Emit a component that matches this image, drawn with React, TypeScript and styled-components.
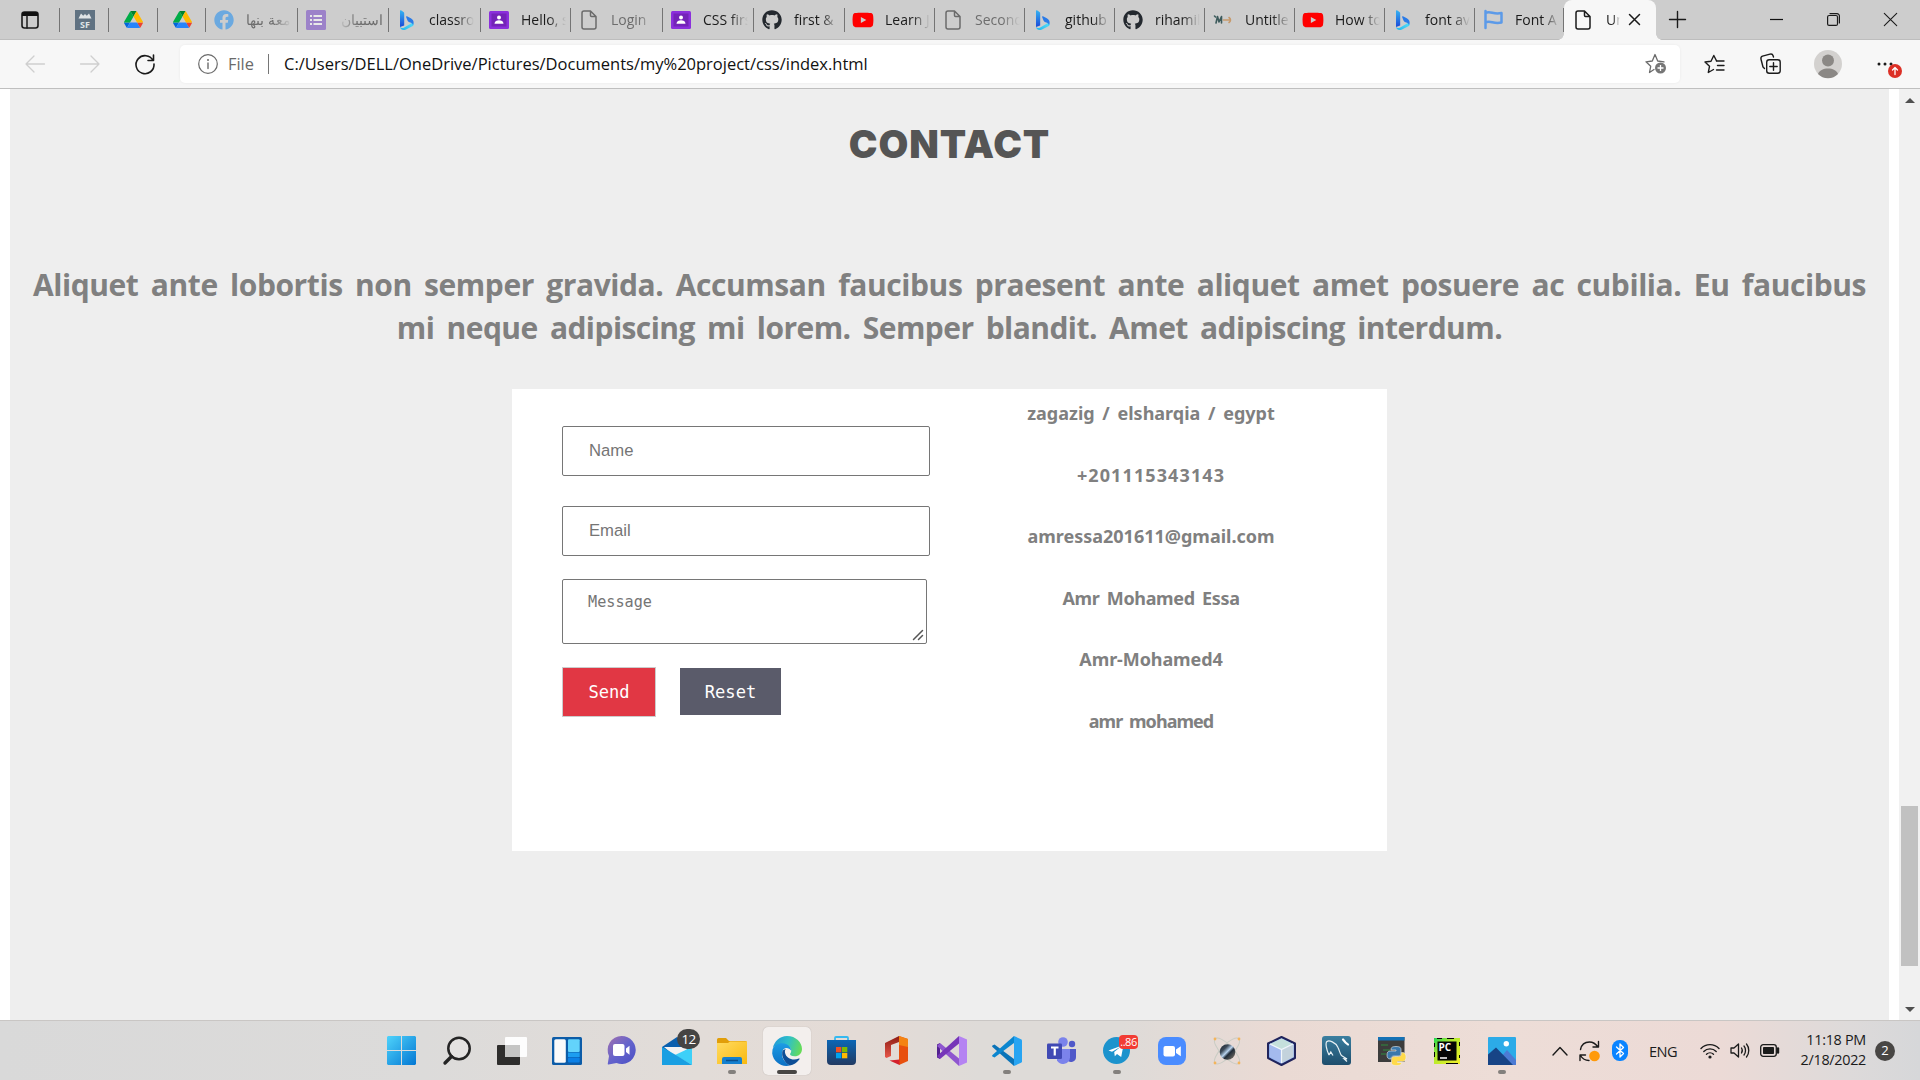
import React from "react";
import styled, { createGlobalStyle, css } from "styled-components";
import { FaGithub, FaFacebook, FaYoutube } from "react-icons/fa";

const ui = `"Open Sans", "Noto Sans", sans-serif`;

const GlobalStyle = createGlobalStyle`
  * { box-sizing: border-box; }
  body { margin: 0; overflow: hidden; font-family: ${ui}; }
  svg { display: block; flex: none; overflow: visible; }
`;

const Screen = styled.div`
  width: 1920px;
  height: 1080px;
  display: flex;
  flex-direction: column;
  background: #fff;
`;

/* ---------- tab strip ---------- */

const TabStrip = styled.div`
  height: 40px;
  flex: none;
  display: flex;
  background: #cdcdcd;
  border-bottom: 1px solid #bdbdbd;
`;

const Tab = styled.div<{ $w: number; $asleep?: boolean; $pinned?: boolean }>`
  position: relative;
  width: ${(p) => p.$w}px;
  height: 39px;
  flex: none;
  display: flex;
  align-items: center;
  padding-left: ${(p) => (p.$pinned ? 0 : 8)}px;
  justify-content: ${(p) => (p.$pinned ? "center" : "flex-start")};
  gap: 12px;
  font-size: 14px;
  color: ${(p) => (p.$asleep ? "#6d6d6d" : "#1b1b1b")};
  &::after {
    content: "";
    position: absolute;
    right: 0;
    top: 8px;
    width: 1px;
    height: 24px;
    background: #747474;
  }
`;

const ActiveTab = styled.div`
  position: relative;
  width: 92px;
  height: 40px;
  flex: none;
  display: flex;
  align-items: center;
  padding: 0 0 1px 11px;
  background: #f7f7f7;
  border-radius: 8px 8px 0 0;
  font-size: 14px;
  color: #1b1b1b;
  &::before,
  &::after {
    content: "";
    position: absolute;
    bottom: 0;
    width: 6px;
    height: 6px;
  }
  &::before {
    left: -6px;
    background: radial-gradient(circle at 0 0, transparent 5.5px, #f7f7f7 6px);
  }
  &::after {
    right: -6px;
    background: radial-gradient(circle at 100% 0, transparent 5.5px, #f7f7f7 6px);
  }
`;

const IconSlot = styled.span<{ $faded?: boolean }>`
  width: 20px;
  flex: none;
  display: flex;
  justify-content: center;
  opacity: ${(p) => (p.$faded ? 0.55 : 1)};
`;

const TabText = styled.span<{ $w?: number; $rtl?: boolean }>`
  width: ${(p) => p.$w ?? 45}px;
  line-height: 24px;
  overflow: hidden;
  white-space: nowrap;
  ${(p) =>
    p.$rtl
      ? css`
          direction: rtl;
          -webkit-mask-image: linear-gradient(to left, #000 55%, transparent);
        `
      : css`
          -webkit-mask-image: linear-gradient(to right, #000 60%, transparent);
        `}
`;

const ActiveText = styled(TabText)`
  margin-left: 15px;
  margin-right: 9px;
  -webkit-mask-image: linear-gradient(to right, #000 50%, transparent);
`;

const NewTab = styled.div`
  display: flex;
  align-items: center;
  margin-left: 13px;
`;

const WindowControls = styled.div`
  margin-left: auto;
  display: flex;
  align-items: center;
  gap: 44px;
  padding-right: 23px;
`;

/* ---------- address bar ---------- */

const Toolbar = styled.div`
  height: 49px;
  flex: none;
  display: flex;
  align-items: center;
  padding: 0 19px 1px 25px;
  background: #f7f7f7;
  border-bottom: 1px solid #bfbfbf;
`;

const NavButtons = styled.div`
  display: flex;
  align-items: center;
  gap: 35px;
  width: 155px;
`;

const AddressBox = styled.div`
  width: 1500px;
  height: 38px;
  display: flex;
  align-items: center;
  padding: 0 13px 0 18px;
  background: #fff;
  border-radius: 5px;
  box-shadow: 0 0 3px rgba(0, 0, 0, 0.06);
`;

const Scheme = styled.span`
  margin-left: 10px;
  width: 40px;
  font-size: 16.4px;
  color: #6a6a6a;
`;

const Divider = styled.span`
  width: 1px;
  height: 20px;
  margin-right: 15px;
  background: #767676;
`;

const Url = styled.span`
  flex: 1;
  font-size: 16.5px;
  color: #111;
`;

const Actions = styled.div`
  flex: 1;
  display: flex;
  align-items: center;
  justify-content: flex-end;
`;

const Action = styled.div<{ $gap: number }>`
  position: relative;
  margin-left: ${(p) => p.$gap}px;
`;

const UpdateBadge = styled.span`
  position: absolute;
  left: 11px;
  top: 8px;
`;

/* ---------- page ---------- */

const Viewport = styled.div`
  height: 931px;
  flex: none;
  display: flex;
`;

const Section = styled.section`
  width: 1879px;
  margin: 0 10px;
  flex: none;
  padding-top: 35px;
  background: #eee;
  display: flex;
  flex-direction: column;
  align-items: center;
`;

const Heading = styled.h2`
  margin: 0 0 99px;
  font: 900 38.5px/40px Inter, "Liberation Sans", sans-serif;
  letter-spacing: 0.9px;
  color: #555;
`;

const Intro = styled.p`
  margin: 0 0 40px;
  font: 700 30px/43px ${ui};
  color: #808080;
`;

const IntroLine = styled.span<{ $track: number }>`
  display: block;
  text-align: center;
  white-space: nowrap;
  word-spacing: 5px;
  letter-spacing: ${(p) => p.$track}px;
`;

const Card = styled.div`
  width: 875px;
  height: 462px;
  padding-left: 50px;
  display: flex;
  background: #fff;
`;

const Form = styled.form`
  width: 451px;
  padding-top: 37px;
`;

const Field = styled.input`
  display: block;
  width: 368px;
  height: 50px;
  margin-bottom: 30px;
  padding: 0 26px;
  border: 1px solid #767676;
  border-radius: 2px;
  font: 16.67px "Liberation Sans", Arial, sans-serif;
  &::placeholder { color: #757575; }
`;

const MessageBox = styled.div`
  position: relative;
  width: 365px;
  margin: -7px 0 23px;
`;

const Message = styled.textarea`
  display: block;
  width: 365px;
  height: 65px;
  padding: 12px 25px;
  border: 1px solid #767676;
  border-radius: 2px;
  overflow: hidden;
  resize: none;
  font: 15.2px/20px "DejaVu Sans Mono", monospace;
  &::placeholder { color: #757575; }
`;

const Grip = styled.span`
  position: absolute;
  right: 4px;
  bottom: 4px;
`;

const Buttons = styled.div`
  display: flex;
  gap: 24px;
`;

const button = css`
  padding: 0;
  font: 17.1px "DejaVu Sans Mono", monospace;
  color: #fff;
`;

const Send = styled.button`
  ${button}
  width: 94px;
  height: 50px;
  border: 1px solid #ccc;
  background: #e13744;
`;

const Reset = styled.button`
  ${button}
  width: 101px;
  height: 47px;
  margin-top: 1px;
  border: 0;
  background: #5a5b6a;
`;

const Contacts = styled.div`
  width: 276px;
  padding-top: 11px;
  display: flex;
  flex-direction: column;
  align-items: center;
  gap: 34.5px;
`;

const ContactLine = styled.div<{ $track: number }>`
  font: 700 18px/27px "Noto Sans", sans-serif;
  letter-spacing: ${(p) => p.$track}px;
  word-spacing: 3px;
  white-space: nowrap;
  color: #808080;
`;

const Scrollbar = styled.div`
  width: 21px;
  display: flex;
  flex-direction: column;
  align-items: center;
  background: #f1f1f1;
`;

const Arrow = styled.span<{ $down?: boolean }>`
  margin-top: ${(p) => (p.$down ? "auto" : "9px")};
  margin-bottom: ${(p) => (p.$down ? "8px" : 0)};
  border: 5px solid transparent;
  border-top-width: ${(p) => (p.$down ? 5 : 0)}px;
  border-bottom-width: ${(p) => (p.$down ? 0 : 5)}px;
  ${(p) => (p.$down ? "border-top-color" : "border-bottom-color")}: #505050;
`;

const Thumb = styled.span`
  width: 17px;
  height: 160px;
  margin-top: 703px;
  background: #c1c1c1;
`;

/* ---------- taskbar ---------- */

const Taskbar = styled.div`
  height: 60px;
  flex: none;
  display: flex;
  align-items: center;
  padding-left: 374px;
  border-top: 1px solid #c9c6c4;
  background: linear-gradient(
    90deg, #d9d9d9 0, #dcdbda 420px, #e2dcd8 700px, #e4dbd6 860px, #dedbd8 980px,
    #dedbd8 1120px, #eadad4 1280px, #edddd7 1500px, #ecdad6 1720px, #dddada 1850px, #d6d7d9 100%
  );
`;

const TaskbarApp = styled.div`
  position: relative;
  width: 55px;
  height: 59px;
  display: flex;
  align-items: center;
  justify-content: center;
`;

const Tile = styled.div<{ $focused?: boolean }>`
  width: 48px;
  height: 48px;
  display: flex;
  align-items: center;
  justify-content: center;
  border-radius: 5px;
  background: ${(p) => (p.$focused ? "#f3efed" : "transparent")};
  box-shadow: ${(p) => (p.$focused ? "0 0 1px rgba(0,0,0,.25)" : "none")};
`;

const Running = styled.span<{ $wide?: boolean }>`
  position: absolute;
  bottom: 6px;
  width: ${(p) => (p.$wide ? 20 : 8)}px;
  height: 4px;
  border-radius: 2px;
  background: ${(p) => (p.$wide ? "#484644" : "#83807d")};
`;

const MailCount = styled.span`
  position: absolute;
  left: 28px;
  top: 8px;
  width: 23px;
  height: 20px;
  border-radius: 10px;
  background: #454443;
  color: #fff;
  font: 13.5px/20px ${ui};
  letter-spacing: -0.6px;
  text-align: center;
`;

const ChatCount = styled.span`
  position: absolute;
  left: 30px;
  top: 14px;
  width: 19px;
  height: 14px;
  border-radius: 4px;
  background: #f23c34;
  color: #fff;
  font: 11px/13px ${ui};
  letter-spacing: -0.5px;
  text-align: center;
`;

const Tray = styled.div`
  display: flex;
  align-items: center;
  margin-left: 23px;
  color: #1b1b1b;
`;

const Lang = styled.span`
  width: 51px;
  padding-left: 21px;
  margin-right: 21px;
  font-size: 14.6px;
  letter-spacing: -0.6px;
`;

const Clock = styled.div`
  width: 86px;
  font-size: 14.4px;
  line-height: 20px;
  letter-spacing: -0.3px;
  text-align: right;
  white-space: nowrap;
  position: relative;
  top: -1px;
`;

const Notice = styled.span`
  width: 20px;
  height: 20px;
  margin-left: 9px;
  border-radius: 50%;
  background: #484644;
  color: #fff;
  font-size: 13px;
  line-height: 19px;
  text-align: center;
`;

const Gap = styled.span<{ $w: number }>`
  width: ${(p) => p.$w}px;
  flex: none;
`;

/* ---------- drawings ---------- */

const line = (w: number, c = "#1b1b1b") => ({
  fill: "none", stroke: c, strokeWidth: w, strokeLinecap: "round" as const, strokeLinejoin: "round" as const,
});

const Drive = () => (
  <svg width="19" height="17" viewBox="0 0 87 78">
    <path d="M6.600 66.850l3.850 6.650c.8 1.400 1.950 2.500 3.300 3.300l13.750-23.800h-27.500c0 1.550.4 3.100 1.200 4.500z" fill="#0066da" />
    <path d="M43.650 25L29.900 1.200c-1.350.8-2.500 1.900-3.300 3.300L1.200 48.500a9 9 0 0 0-1.200 4.500h27.500z" fill="#00ac47" />
    <path d="M73.550 76.800c1.350-.8 2.500-1.900 3.300-3.300l8.950-16a9 9 0 0 0 1.200-4.500H59.500l5.850 11.500z" fill="#ea4335" />
    <path d="M43.650 25L57.400 1.200C56.050.4 54.500 0 52.900 0H34.400c-1.600 0-3.150.45-4.500 1.200z" fill="#00832d" />
    <path d="M59.800 53H27.500L13.750 76.800c1.350.8 2.900 1.200 4.500 1.200h50.800c1.600 0 3.150-.45 4.500-1.200z" fill="#2684fc" />
    <path d="M73.400 26.500L60.700 4.500c-.8-1.400-1.950-2.500-3.300-3.300L43.650 25 59.800 53h27.450c0-1.550-.4-3.100-1.200-4.500z" fill="#ffba00" />
  </svg>
);

const Bing = () => (
  <svg width="14" height="20" viewBox="0 0 14 20">
    <defs>
      <linearGradient id="bingA" x1="0" y1="0" x2="0" y2="1"><stop offset="0" stopColor="#35b5f2" /><stop offset="1" stopColor="#1b48d8" /></linearGradient>
      <linearGradient id="bingB" x1="0" y1="1" x2="1" y2="0"><stop offset="0" stopColor="#1fb5ee" /><stop offset="1" stopColor="#5be0f8" /></linearGradient>
    </defs>
    <path d="M0 .8C0 .2.500 0 1 .300L3.500 2c.5.300.7.800.7 1.400v12.200L0 17z" fill="url(#bingA)" />
    <path d="M0 16.500c.5 1.500 2.500 2 4.200 1l8-4.800c1.800-.2 2 2.300.6 3.300L6 19.400c-3 1.500-6 .1-6-2.900z" fill="url(#bingB)" />
    <path d="M6 6.800c0-.5.500-.7 1-.5l3.800 2c3 1.700 3.600 4.500 2 7.200.2-1.400-.6-2.300-1.800-2.700l-2.200-.9c-.7-.3-1-.8-1.300-1.400z" fill="#2a7be8" />
  </svg>
);

const PurpleCard = () => (
  <svg width="20" height="18" viewBox="0 0 20 18">
    <rect width="20" height="18" rx="1.500" fill="#8b2fdc" />
    <rect x="2.500" y="2.500" width="15" height="13" fill="#7423b8" />
    <circle cx="10" cy="6.500" r="2" fill="#fff" />
    <path d="M5.500 12.800c0-4.600 9-4.600 9 0z" fill="#fff" />
  </svg>
);

const FormList = () => (
  <svg width="20" height="20" viewBox="0 0 20 20">
    <rect width="20" height="20" rx="1.500" fill="#7545c6" />
    <path d="M7.500 6H16M7.500 10H16M7.500 14H16" stroke="#fff" strokeWidth="1.800" />
    <path d="M4 6h2M4 10h2M4 14h2" stroke="#fff" strokeWidth="1.800" />
  </svg>
);

const Page = () => (
  <svg width="16" height="20" viewBox="0 0 16 20">
    <path d="M3 1h6.500L15 6.500V17a2 2 0 0 1-2 2H3a2 2 0 0 1-2-2V3a2 2 0 0 1 2-2zM9.500 1v4.500a1 1 0 0 0 1 1H15" {...line(1.500)} />
  </svg>
);

const Sf = () => (
  <svg width="20" height="20" viewBox="0 0 20 20">
    <rect width="20" height="20" fill="#607282" />
    <path d="M3.500 8.500l2.500-5 2.200 2.200L10 4l1.800 1.700L14 3.500l2.500 5z" fill="#dfe3e6" />
    <text x="10" y="17.500" fontSize="9" fontWeight="700" fill="#dfe3e6" textAnchor="middle" fontFamily="Open Sans">SF</text>
  </svg>
);

const Flag = () => (
  <svg width="19" height="19" viewBox="0 0 19 19">
    <path d="M1.500 1v17M1.500 3c5-2.500 8 2 16 0v9.500c-8 2-11-2.500-16 0" {...line(2.500, "#5c9ae8")} />
  </svg>
);

const MavenMark = () => (
  <svg width="18" height="10" viewBox="0 0 18 10">
    <path d="M.5 1l1 1M2 8L3.500 1.500 5 7 7.500 1.500 7.500 8" {...line(1.600, "#3d5b5c")} />
    <path d="M9.500 5h6M15 2.500c2 1.500 2 3.500 0 5" {...line(1.600, "#c79a6c")} />
  </svg>
);

const AddFavorite = () => (
  <svg width="22" height="21" viewBox="0 0 22 21">
    <path d="M9 16.500L4.500 19.500l1.200-6.200L1 8.800l6.300-.8L10 1.500 12.700 8l6.300.8" {...line(1.300, "#6b6b6b")} />
    <circle cx="15.500" cy="15" r="5.500" fill="#767676" />
    <path d="M15.500 12v6M12.500 15h6" stroke="#fff" strokeWidth="1.300" />
  </svg>
);

const Favorites = () => (
  <svg width="21" height="20" viewBox="0 0 21 20">
    <path d="M9.500 15.500L4.300 18.500l1.200-6.200L1 8l6-.8L9.800 1.500l2.700 5.200" {...line(1.400)} />
    <path d="M12.500 7H20M13.500 11.500H20M12.500 16H20" {...line(1.400)} />
  </svg>
);

const Collections = () => (
  <svg width="21" height="21" viewBox="0 0 21 21">
    <path d="M4.500 15.500L3 14 1 6.300C.6 4.500 1.300 3.600 2.500 3.200L10 1.100c1.500-.4 2.700.3 3.100 1.600l.4 1.300" {...line(1.400)} />
    <rect x="6.700" y="6.700" width="13.500" height="13.500" rx="2.500" {...line(1.400)} />
    <path d="M13.500 9.800v7.400M9.800 13.500h7.400" {...line(1.400)} />
  </svg>
);

const Avatar = () => (
  <svg width="28" height="28" viewBox="0 0 28 28">
    <circle cx="14" cy="14" r="14" fill="#d3d1cf" />
    <circle cx="14" cy="10.500" r="6" fill="#8b8885" />
    <path d="M4 24c2-7.500 18-7.500 20 0a14 14 0 0 1-20 0z" fill="#8b8885" />
  </svg>
);

const WindowsLogo = () => (
  <svg width="29" height="29" viewBox="0 0 29 29">
    <defs><linearGradient id="win" x1="0" y1="0" x2="1" y2="1"><stop offset="0" stopColor="#4fd3fb" /><stop offset="1" stopColor="#0377d3" /></linearGradient></defs>
    <path d="M1 0h13v14H0V1zM15 0h13l1 1v13H15zM0 15h14v14H1l-1-1zM15 15h14v13l-1 1H15z" fill="url(#win)" />
  </svg>
);

const Search = () => (
  <svg width="28" height="29" viewBox="0 0 28 29">
    <circle cx="16" cy="12.500" r="10.700" fill="#e4e2e1" stroke="#242424" strokeWidth="2.500" />
    <path d="M8.500 20.500L2 27" stroke="#242424" strokeWidth="3.400" strokeLinecap="round" />
  </svg>
);

const TaskView = () => (
  <svg width="30" height="28" viewBox="0 0 30 28">
    <rect x="0" y="8" width="23" height="20" rx="1" fill="#2e2d2c" />
    <rect x="8" y="0" width="22" height="20" rx="1" fill="#fff" opacity=".93" />
    <rect x="8" y="8" width="15" height="12" fill="#c5c5c4" />
  </svg>
);

const Widgets = () => (
  <svg width="30" height="28" viewBox="0 0 30 28">
    <rect width="30" height="28" rx="1.500" fill="#0c5ca8" />
    <rect x="2.300" y="2.300" width="11.500" height="23.400" rx="1.500" fill="#fafafa" />
    <rect x="16" y="2.300" width="11.700" height="12.700" rx="1" fill="#63d3fb" />
    <rect x="16" y="15.500" width="11.700" height="4.500" fill="#1c9df0" />
    <rect x="16" y="20.500" width="11.700" height="5" rx="1" fill="#0b80e6" />
  </svg>
);

const Chat = () => (
  <svg width="29" height="29" viewBox="0 0 29 29">
    <defs><linearGradient id="chat" x1="0" y1="0" x2="1" y2="1"><stop offset="0" stopColor="#a270ae" /><stop offset=".5" stopColor="#6463cc" /><stop offset="1" stopColor="#4a4fc4" /></linearGradient></defs>
    <path d="M14.500 0a14 14 0 1 1-5 27l-8 1.500c-.6 0-.9-.4-.7-1L2 20A14 14 0 0 1 14.500 0z" fill="url(#chat)" />
    <rect x="6" y="8" width="11.500" height="12" rx="2" fill="#fff" />
    <path d="M19 12.500l3.500-2.800v9l-3.500-2.800z" fill="#fff" />
  </svg>
);

const Mail = () => (
  <svg width="30" height="28" viewBox="0 0 30 28">
    <path d="M0 10L15 0l15 10v5H0z" fill="#0a5fae" />
    <path d="M2 10h26L15 21z" fill="#f2f2f2" />
    <path d="M30 10v18L13 18z" fill="#3dd0f8" />
    <path d="M0 10v18h30L13 17.500z" fill="#199fe2" />
  </svg>
);

const Explorer = () => (
  <svg width="30" height="28" viewBox="0 0 30 28">
    <defs><linearGradient id="fold" x1="0" y1="0" x2="1" y2="1"><stop offset="0" stopColor="#ffdb62" /><stop offset="1" stopColor="#f9b90f" /></linearGradient></defs>
    <path d="M0 2.500A1.500 1.500 0 0 1 1.500 1H9l3 3h16.500A1.500 1.500 0 0 1 30 5.500V12H0z" fill="#e19e09" />
    <path d="M0 6h11l2-1.500h17V27H0z" fill="url(#fold)" />
    <path d="M5 27v-5a2 2 0 0 1 2-2h16a2 2 0 0 1 2 2v5z" fill="#1480cf" />
    <path d="M9 23.500h12" stroke="#0a4f8c" strokeWidth="1.500" />
  </svg>
);

const Edge = () => (
  <svg width="30" height="30" viewBox="0 0 30 30">
    <defs>
      <linearGradient id="edgeA" x1="0" y1=".3" x2="1" y2=".5"><stop offset="0" stopColor="#2299d8" /><stop offset=".5" stopColor="#2fc0c8" /><stop offset="1" stopColor="#66dc58" /></linearGradient>
      <linearGradient id="edgeB" x1="0" y1="0" x2="0" y2="1"><stop offset="0" stopColor="#1d9ce4" /><stop offset="1" stopColor="#0c70c4" /></linearGradient>
    </defs>
    <path d="M.8 12.500C2.200 5 8 0 15 0c9 0 15 6.500 15 13 0 4.500-3.200 7.300-7.200 7.300-3.500 0-5-1.300-4.700-2.300.4-1 1.100-1.400 1.100-3.200 0-3.300-3.200-6.300-8-6.300-4.200 0-8.400 1-10.400 4z" fill="url(#edgeA)" />
    <path d="M.5 13.500C2 9.500 6 7 10.500 7.200c5 .1 8.700 3.700 8.700 7.500-2-3-6-3.800-8.200-.7-2.600 4-.5 11 6.800 15.600C9 31.500 1.300 25.500.2 17.500z" fill="url(#edgeB)" />
    <path d="M10.800 14.500c-2 6 2 11.800 8.500 12.200 3.200.2 5.800-1 8-3.200.6-.6.200-1.200-.5-.9-5.500 2.400-12.500.4-13.800-5.800-.3-1.700.2-3 .8-4z" fill="#0d4e96" />
    <path d="M10.800 14.500C9.500 20 12 26.500 17.800 29.600c3.800-.6 7.200-2.800 9.300-6-5.300 3.800-15 2.400-16.300-9.100z" fill="#0d4e96" />
  </svg>
);

const Store = () => (
  <svg width="29" height="29" viewBox="0 0 29 29">
    <defs><linearGradient id="store" x1="0" y1="0" x2="0" y2="1"><stop offset="0" stopColor="#0b66b5" /><stop offset="1" stopColor="#223a62" /></linearGradient></defs>
    <path d="M8 6V2a1 1 0 0 1 1-1h11a1 1 0 0 1 1 1v4" fill="none" stroke="#35b9f0" strokeWidth="1.800" />
    <path d="M0 4h29v21a4 4 0 0 1-4 4H4a4 4 0 0 1-4-4z" fill="url(#store)" />
    <rect x="9" y="11" width="5.300" height="5.300" fill="#f25022" /><rect x="15" y="11" width="5.300" height="5.300" fill="#7fba00" />
    <rect x="9" y="17" width="5.300" height="5.300" fill="#00a4ef" /><rect x="15" y="17" width="5.300" height="5.300" fill="#ffb900" />
  </svg>
);

const Office = () => (
  <svg width="23" height="29" viewBox="0 0 23 29">
    <defs><linearGradient id="off" x1="0" y1="0" x2="0" y2="1"><stop offset="0" stopColor="#8d1c14" /><stop offset="1" stopColor="#e8574a" /></linearGradient></defs>
    <path d="M0 7L14 0v6L6 9v11l-4.500 2L0 21z" fill="url(#off)" />
    <path d="M14 0l9 3v22l-9 4z" fill="#e8500e" />
    <path d="M14 0l9 3v8l-9-2z" fill="#f48312" />
    <path d="M4.500 24.500l10-1V29z" fill="#d4202c" />
  </svg>
);

const VisualStudio = () => (
  <svg width="30" height="30" viewBox="0 0 30 30">
    <path d="M0 8.500L3 7v16l-3-1.500z" fill="#52218f" />
    <path d="M3 7l19 15.500V30L0 10z" fill="#8f56cf" />
    <path d="M3 23L22 7.500V0L0 20z" fill="#7636b8" />
    <path d="M22 0l8 3.500v23L22 30z" fill="#b583f2" />
  </svg>
);

const VsCode = () => (
  <svg width="30" height="30" viewBox="0 0 30 30">
    <path d="M2.500 8.500L22 23v7L.5 11c-.6-.6-.6-1 0-1.500z" fill="#0a73b8" />
    <path d="M2.500 21.500L22 7V0L.5 19c-.6.600-.6 1 0 1.500z" fill="#0b86cf" />
    <path d="M22 0l7 3.200c.6.300 1 .8 1 1.500v20.600c0 .7-.4 1.200-1 1.500L22 30z" fill="#27a4f2" />
  </svg>
);

const Teams = () => (
  <svg width="30" height="28" viewBox="0 0 30 28">
    <circle cx="25" cy="7" r="3.200" fill="#5059c9" /><circle cx="16" cy="5" r="4.800" fill="#7b83eb" />
    <path d="M20 12h9v8a5 5 0 0 1-9 3z" fill="#5059c9" />
    <path d="M10 12h13v8.500a7 7 0 0 1-13 3z" fill="#7b83eb" />
    <rect x="0" y="6.500" width="15" height="15.500" rx="1.300" fill="#4049b4" />
    <path d="M4 10.500h7.500M7.750 10.500v8" stroke="#fff" strokeWidth="2.200" />
  </svg>
);

const Telegram = () => (
  <svg width="27" height="27" viewBox="0 0 27 27">
    <circle cx="13.500" cy="13.500" r="13.500" fill="#1c93cd" />
    <path d="M5.500 13.500L20.500 8l-2.300 12-4.200-3-2.200 2.200-.6-4.200L18 9.500l-9 5.300z" fill="#fff" />
  </svg>
);

const Zoom = () => (
  <svg width="28" height="28" viewBox="0 0 28 28">
    <rect width="28" height="28" rx="8" fill="#4a8cff" />
    <rect x="5.500" y="9" width="11.500" height="10.500" rx="2" fill="#fff" /><path d="M18 12.500l4.800-3.200v10L18 16z" fill="#fff" />
  </svg>
);

const Atom = () => (
  <svg width="28" height="28" viewBox="0 0 28 28">
    <defs><linearGradient id="globe" x1="0" y1="0" x2="1" y2="1"><stop offset="0" stopColor="#1a222d" /><stop offset=".3" stopColor="#3c4a58" /><stop offset=".48" stopColor="#b9d4ee" /><stop offset=".6" stopColor="#1f2b38" /><stop offset="1" stopColor="#8a8070" /></linearGradient></defs>
    <ellipse cx="14" cy="14" rx="17" ry="6" transform="rotate(46 14 14)" fill="none" stroke="#c9ccc4" />
    <ellipse cx="14" cy="14" rx="17" ry="6" transform="rotate(-46 14 14)" fill="none" stroke="#c9ccc4" />
    <circle cx="14.500" cy="15" r="7.800" fill="url(#globe)" />
    <g fill="#f4b45a"><circle cx="2" cy="2" r="1.400" /><circle cx="26" cy="2" r="1.400" /><circle cx="2" cy="26" r="1.400" /><circle cx="26" cy="26" r="1.400" /></g>
  </svg>
);

const NetBeans = () => (
  <svg width="29" height="30" viewBox="0 0 29 30">
    <path d="M14.500 1L28 7.500v14.500L14.500 29 1 22V7.500z" fill="#8fb0ef" stroke="#20245c" strokeWidth="2" strokeLinejoin="round" />
    <path d="M14.500 2.500L26 8l-11.500 5.500L3 8z" fill="#c5e0dc" />
    <path d="M15 13.500L26.500 8v13L15 27z" fill="#c3d2dc" /><path d="M3 8l11 5.500V27L3 21z" fill="#a4baee" />
    <path d="M3 8l11.500 5.500L26 8M14.500 13.500V27" fill="none" stroke="#f2f7fb" strokeWidth="1.200" />
  </svg>
);

const MySql = () => (
  <svg width="29" height="29" viewBox="0 0 29 29">
    <defs><linearGradient id="sql" x1="0" y1="0" x2="0" y2="1"><stop offset="0" stopColor="#3b7fa0" /><stop offset="1" stopColor="#1d4d6c" /></linearGradient></defs>
    <rect width="29" height="29" rx="3" fill="url(#sql)" />
    <path d="M7 19C4.500 14 3 7 5 5.500c2-1.500 8.500.5 11 6 1.700 3.500 1.800 6 3.500 8l5.500 3.500-3-.2 3 2.700M7 19l1.800-3 2.200 3.500" fill="none" stroke="#e8f1f5" strokeWidth="1.200" />
    <path d="M21 3.500l2.500 3L26 8.500" stroke="#fff" strokeWidth="2.200" strokeLinecap="round" fill="none" />
  </svg>
);

const Python = () => (
  <svg width="28" height="30" viewBox="0 0 28 30">
    <rect width="26.500" height="25" y="1" fill="#3c3c3c" /><rect width="26.500" height="3.500" y="1" fill="#1471b5" />
    <path d="M3 9h7M5 14h7M3 18h5" stroke="#2f8a3e" strokeWidth="1.200" />
    <path d="M18 10.500c4 0 5 1 5 3.500v3c0 2-1 3-3 3h-4c-2 0-3 1-3 3h-1c-2 0-3-1.500-3-4s1-4 3-4h6v-1h-5c0-2.500 1-3.500 5-3.500z" fill="#3a77ac" stroke="#eee" strokeWidth=".6" />
    <path d="M18.500 29.500c-4 0-5-1-5-3v-3c0-2 1-3 3-3h4c2 0 3-1 3-4h1c2.500 0 3.500 2 3.500 4.500s-1 4.500-3.500 4.500h-5v1h4c0 2-1 3-5 3z" fill="#ffd94a" stroke="#eee" strokeWidth=".6" />
  </svg>
);

const PyCharm = () => (
  <svg width="26" height="26" viewBox="0 0 26 26">
    <defs><linearGradient id="pc" x1="0" y1="0" x2="1" y2="1"><stop offset="0" stopColor="#21d752" /><stop offset=".4" stopColor="#b4ea2c" /><stop offset="1" stopColor="#f4f02a" /></linearGradient></defs>
    <rect width="26" height="26" fill="url(#pc)" />
    <path d="M.5 5v4M.5 14v5M3 .5h5M13 .5h7M25.500 4v4M25.500 17v3M12 25.500h12" stroke="#050505" />
    <rect x="3.500" y="3.500" width="19" height="19" fill="#050505" />
    <text x="4.500" y="13" fontSize="10" fontWeight="700" fill="#fff" fontFamily="Open Sans">PC</text>
    <path d="M6 20h7" stroke="#fff" strokeWidth="1.500" />
  </svg>
);

const Photos = () => (
  <svg width="28" height="28" viewBox="0 0 28 28">
    <rect width="28" height="28" rx="1" fill="#2cabe8" />
    <path d="M14 19l5-6 9 10v5H14z" fill="#4c7bd4" /><path d="M0 17.500L8 10.500l17 17.500H0z" fill="#174486" />
    <circle cx="18.300" cy="6.700" r="2.700" fill="#fff" />
  </svg>
);

const TrayStatus = () => (
  <>
    <svg width="16" height="10" viewBox="0 0 16 10"><path d="M1 9l7-7.500L15 9" {...line(1.400)} /></svg>
    <Gap $w={11} />
    <svg width="22" height="22" viewBox="0 0 22 22">
      <path d="M1.500 9.500C2.500 4.500 6 2 10.500 2c3.500 0 6 1.500 8.500 5M19.500 1.500V7h-5.500M1 20.500V15h5.500M1.500 15.500c2 3.500 5 5 8.500 5" {...line(1.400)} />
      <circle cx="15.500" cy="16" r="5.300" fill="#ff9a0a" />
    </svg>
    <Gap $w={11} />
    <svg width="16" height="21" viewBox="0 0 16 21"><rect width="16" height="21" rx="7.500" fill="#0a84ff" /><path d="M4.500 7l7 6.500-3.500 3.500V4l3.500 3.500-7 6.500" {...line(1.300, "#fff")} /></svg>
  </>
);

const TrayDevices = () => (
  <>
    <svg width="20" height="16" viewBox="0 0 20 16">
      <path d="M1 5.500a12.500 12.500 0 0 1 18 0M3.800 8.500a8.600 8.600 0 0 1 12.400 0M6.500 11.300a5 5 0 0 1 7 0" {...line(1.400)} />
      <circle cx="10" cy="14" r="1.600" fill="#1b1b1b" />
    </svg>
    <Gap $w={10} />
    <svg width="20" height="17" viewBox="0 0 20 17">
      <path d="M1 6v5h3l4.500 4V2L4 6zM11.500 6c1 1.500 1 3.500 0 5M14 4c2 2.500 2 6.500 0 9M16.500 2c3 3.500 3 9.500 0 13" {...line(1.300)} />
    </svg>
    <Gap $w={10} />
    <svg width="20" height="13" viewBox="0 0 20 13">
      <rect x=".7" y=".7" width="15.600" height="11.600" rx="2.500" {...line(1.300)} /><rect x="3" y="3" width="11" height="7" rx=".8" fill="#1b1b1b" />
      <path d="M18 4.500v4" stroke="#1b1b1b" strokeWidth="2.400" strokeLinecap="round" />
    </svg>
  </>
);

/* ---------- data ---------- */

type TabInfo = { w: number; icon: React.ReactNode; title?: string; asleep?: boolean; rtl?: boolean; pinned?: boolean };

const youtube = <FaYoutube size={22} color="#f00" />;
const github = <FaGithub size={20} color="#24292f" />;

const tabs: TabInfo[] = [
  { w: 49, icon: <Sf />, pinned: true },
  { w: 49, icon: <Drive />, pinned: true },
  { w: 48, icon: <Drive />, pinned: true },
  { w: 92, icon: <FaFacebook size={20} color="#1c8cf0" />, title: "معة بنها", asleep: true },
  { w: 91, icon: <FormList />, title: "استبيان", asleep: true, rtl: true },
  { w: 92, icon: <Bing />, title: "classro" },
  { w: 90, icon: <PurpleCard />, title: "Hello, s" },
  { w: 92, icon: <Page />, title: "Login", asleep: true },
  { w: 91, icon: <PurpleCard />, title: "CSS firs" },
  { w: 91, icon: github, title: "first &" },
  { w: 90, icon: youtube, title: "Learn J" },
  { w: 90, icon: <Page />, title: "Second", asleep: true },
  { w: 90, icon: <Bing />, title: "github" },
  { w: 90, icon: github, title: "rihamil" },
  { w: 90, icon: <MavenMark />, title: "Untitle" },
  { w: 90, icon: youtube, title: "How to" },
  { w: 90, icon: <Bing />, title: "font av" },
  { w: 89, icon: <Flag />, title: "Font A" },
];

const contacts: [string, number][] = [
  ["zagazig / elsharqia / egypt", 0],
  ["+201115343143", 1.1],
  ["amressa201611@gmail.com", 0],
  ["Amr Mohamed Essa", -0.35],
  ["Amr-Mohamed4", -0.1],
  ["amr mohamed", -0.95],
];

type AppInfo = { icon: React.ReactNode; running?: boolean; focused?: boolean; badge?: React.ReactNode };

const apps: AppInfo[] = [
  { icon: <WindowsLogo /> }, { icon: <Search /> }, { icon: <TaskView /> }, { icon: <Widgets /> }, { icon: <Chat /> },
  { icon: <Mail />, badge: <MailCount>12</MailCount> },
  { icon: <Explorer />, running: true },
  { icon: <Edge />, running: true, focused: true },
  { icon: <Store /> }, { icon: <Office /> }, { icon: <VisualStudio /> },
  { icon: <VsCode />, running: true },
  { icon: <Teams /> },
  { icon: <Telegram />, running: true, badge: <ChatCount>..86</ChatCount> },
  { icon: <Zoom /> }, { icon: <Atom /> }, { icon: <NetBeans /> }, { icon: <MySql /> }, { icon: <Python /> }, { icon: <PyCharm /> },
  { icon: <Photos />, running: true },
];

export default function App() {
  return (
    <Screen>
      <GlobalStyle />
      <TabStrip>
        <Tab $w={60} $pinned>
          <svg width="18" height="18" viewBox="0 0 18 18">
            <rect x="1" y="1" width="16" height="16" rx="2.500" {...line(1.600)} />
            <path d="M1 5V3.500A2.500 2.500 0 0 1 3.500 1h11A2.500 2.500 0 0 1 17 3.500V5z" fill="#111" />
            <path d="M6 5v12" {...line(1.500)} />
          </svg>
        </Tab>
        {tabs.map((t, i) => (
          <Tab key={i} $w={t.w} $asleep={t.asleep} $pinned={t.pinned}>
            <IconSlot $faded={t.asleep}>{t.icon}</IconSlot>
            {t.title && <TabText $rtl={t.rtl}>{t.title}</TabText>}
          </Tab>
        ))}
        <ActiveTab>
          <Page />
          <ActiveText $w={14}>Un</ActiveText>
          <svg width="11" height="11" viewBox="0 0 11 11"><path d="M.5.5l10 10M10.500.5l-10 10" {...line(1.500)} /></svg>
        </ActiveTab>
        <NewTab>
          <svg width="17" height="17" viewBox="0 0 17 17"><path d="M8.500.5v16M.5 8.500h16" {...line(1.400)} /></svg>
        </NewTab>
        <WindowControls>
          <svg width="13" height="13" viewBox="0 0 13 13"><path d="M0 6.500h13" stroke="#111" strokeWidth="1.200" /></svg>
          <svg width="13" height="13" viewBox="0 0 13 13">
            <rect x=".6" y="2.500" width="9.900" height="9.900" rx="1.500" {...line(1.200)} />
            <path d="M3 .6h7A2.400 2.400 0 0 1 12.400 3v7" {...line(1.200)} />
          </svg>
          <svg width="13" height="13" viewBox="0 0 13 13"><path d="M.3.3l12.400 12.400M12.700.3L.3 12.700" {...line(1.100)} /></svg>
        </WindowControls>
      </TabStrip>

      <Toolbar>
        <NavButtons>
          <svg width="20" height="18" viewBox="0 0 20 18"><path d="M9 1L1 9l8 8M1 9h18.500" {...line(1.300, "#cfcfcf")} /></svg>
          <svg width="20" height="18" viewBox="0 0 20 18"><path d="M11 1l8 8-8 8M19 9H.5" {...line(1.300, "#cfcfcf")} /></svg>
          <svg width="20" height="20" viewBox="0 0 20 20"><path d="M18.500 1v5.500H13M18 6.500A9 9 0 1 0 19 10" {...line(1.600)} /></svg>
        </NavButtons>
        <AddressBox>
          <svg width="20" height="20" viewBox="0 0 20 20">
            <circle cx="10" cy="10" r="9.300" {...line(1.200, "#6a6a6a")} />
            <path d="M10 9v5.500" {...line(1.400, "#6a6a6a")} /><circle cx="10" cy="6" r="1" fill="#6a6a6a" />
          </svg>
          <Scheme>File</Scheme>
          <Divider />
          <Url>C:/Users/DELL/OneDrive/Pictures/Documents/my%20project/css/index.html</Url>
          <AddFavorite />
        </AddressBox>
        <Actions>
          <Action $gap={0}><Favorites /></Action>
          <Action $gap={35}><Collections /></Action>
          <Action $gap={33}><Avatar /></Action>
          <Action $gap={35}>
            <svg width="24" height="16" viewBox="0 0 24 16">
              <circle cx="2" cy="8" r="1.500" fill="#1b1b1b" /><circle cx="8" cy="8" r="1.500" fill="#1b1b1b" /><circle cx="14" cy="8" r="1.500" fill="#1b1b1b" />
            </svg>
            <UpdateBadge>
              <svg width="14" height="14" viewBox="0 0 14 14">
                <circle cx="7" cy="7" r="7" fill="#dc3026" /><path d="M7 10.500v-7M4.500 6L7 3.500 9.500 6" {...line(1.300, "#fff")} />
              </svg>
            </UpdateBadge>
          </Action>
        </Actions>
      </Toolbar>

      <Viewport>
        <Section>
          <Heading>CONTACT</Heading>
          <Intro>
            <IntroLine $track={-0.43}>
              Aliquet ante lobortis non semper gravida. Accumsan faucibus praesent ante aliquet amet posuere ac cubilia. Eu faucibus
            </IntroLine>
            <IntroLine $track={-0.56}>mi neque adipiscing mi lorem. Semper blandit. Amet adipiscing interdum.</IntroLine>
          </Intro>
          <Card>
            <Form onSubmit={(e) => e.preventDefault()}>
              <Field type="text" placeholder="Name" />
              <Field type="email" placeholder="Email" />
              <MessageBox>
                <Message placeholder="Message" />
                <Grip>
                  <svg width="10" height="10" viewBox="0 0 10 10"><path d="M.5 9.500l9-9M5.500 9.500l4-4" {...line(1.500, "#555")} /></svg>
                </Grip>
              </MessageBox>
              <Buttons>
                <Send type="submit">Send</Send>
                <Reset type="reset">Reset</Reset>
              </Buttons>
            </Form>
            <Contacts>
              {contacts.map(([text, track]) => (
                <ContactLine key={text} $track={track}>{text}</ContactLine>
              ))}
            </Contacts>
          </Card>
        </Section>
        <Scrollbar>
          <Arrow />
          <Thumb />
          <Arrow $down />
        </Scrollbar>
      </Viewport>

      <Taskbar>
        {apps.map((a, i) => (
          <TaskbarApp key={i}>
            <Tile $focused={a.focused}>{a.icon}</Tile>
            {a.badge}
            {a.running && <Running $wide={a.focused} />}
          </TaskbarApp>
        ))}
        <Tray>
          <TrayStatus />
          <Lang>ENG</Lang>
          <TrayDevices />
          <Clock>
            11:18 PM
            <br />
            2/18/2022
          </Clock>
          <Notice>2</Notice>
        </Tray>
      </Taskbar>
    </Screen>
  );
}
